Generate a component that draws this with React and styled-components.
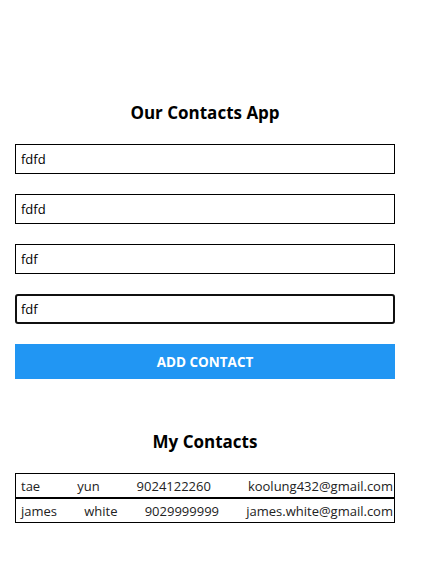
import React, { useState } from "react";
import styled, { createGlobalStyle } from "styled-components";

const GlobalStyle = createGlobalStyle`
  body {
    margin: 0;
    background: #fff;
    font-family: "Open Sans", "Noto Sans", sans-serif;
    color: #000;
  }
`;

const Container = styled.div`
  width: 380px;
  margin: 0 15px;
  padding-top: 101px;
`;

const Title = styled.h1`
  margin: 0 0 ${(p) => p.$gap}px;
  font-size: 17px;
  line-height: 24px;
  font-weight: 700;
  text-align: center;
`;

const Form = styled.form`
  display: flex;
  flex-direction: column;
  gap: 20px;
`;

const Input = styled.input`
  box-sizing: border-box;
  width: 100%;
  height: 30px;
  margin: 0;
  padding: 0 5px;
  border: 1px solid #000;
  border-radius: 0;
  font-family: inherit;
  font-size: 13px;
  color: #000;
  background: #fff;

  &:focus {
    outline: none;
    border: 2px solid #101010;
    border-radius: 3px;
    padding: 0 4px;
  }
`;

const Button = styled.button`
  height: 35px;
  margin: 0;
  border: none;
  background: #2196f3;
  color: #fff;
  font-family: inherit;
  font-size: 13.5px;
  font-weight: 700;
  cursor: pointer;
`;

const Section = styled.div`
  margin-top: 51px;
`;

const List = styled.div`
  display: flex;
  flex-direction: column;
`;

const Row = styled.div`
  display: flex;
  justify-content: space-between;
  height: 25px;
  box-sizing: border-box;
  align-items: center;
  padding: 0 1px 0 5px;
  border: 1px solid #000;
  font-size: 13px;
  color: #222;
  white-space: nowrap;
`;

const contacts = [
  { first: "tae", last: "yun", phone: "9024122260", email: "koolung432@gmail.com" },
  { first: "james", last: "white", phone: "9029999999", email: "james.white@gmail.com" },
];

export default function App() {
  const [values, setValues] = useState(["fdfd", "fdfd", "fdf", "fdf"]);

  const update = (i) => (e) => {
    const next = [...values];
    next[i] = e.target.value;
    setValues(next);
  };

  return (
    <Container>
      <GlobalStyle />
      <Title $gap={19}>Our Contacts App</Title>
      <Form onSubmit={(e) => e.preventDefault()}>
        {values.map((v, i) => (
          <Input key={i} value={v} onChange={update(i)} autoFocus={i === 3} spellCheck />
        ))}
        <Button type="submit">ADD CONTACT</Button>
      </Form>
      <Section>
        <Title $gap={19}>My Contacts</Title>
        <List>
          {contacts.map((c) => (
            <Row key={c.email}>
              <span>{c.first}</span>
              <span>{c.last}</span>
              <span>{c.phone}</span>
              <span>{c.email}</span>
            </Row>
          ))}
        </List>
      </Section>
    </Container>
  );
}
